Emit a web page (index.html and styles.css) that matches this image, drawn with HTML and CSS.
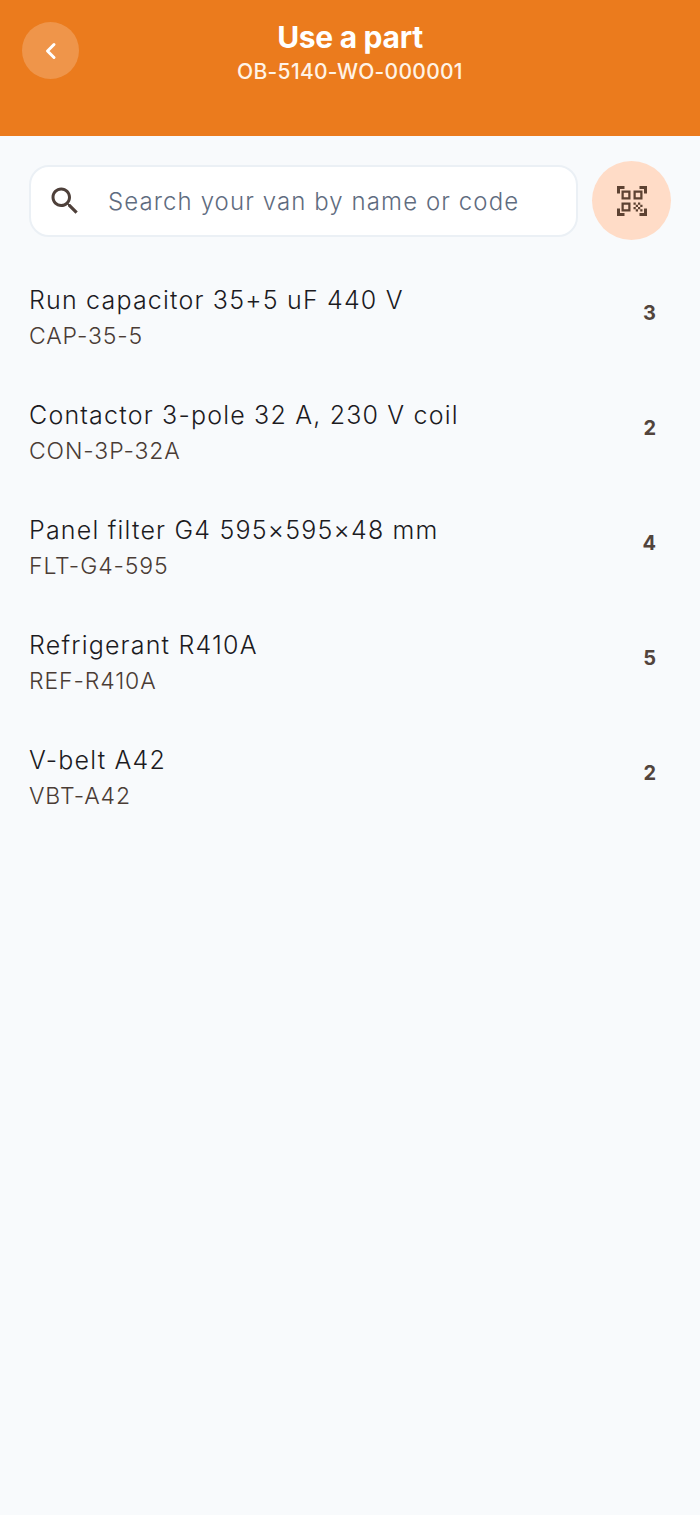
FILE: index.html
```html
<!DOCTYPE html>
<html lang="en">
<head>
  <meta charset="UTF-8" />
  <meta name="viewport" content="width=device-width, initial-scale=1.0"/>
  <title>Use a part</title>
  <link rel="stylesheet" href="styles.css">
</head>
<body>
  <header class="topbar">
    <button class="back-btn" aria-label="Back">
      <svg width="18" height="22" viewBox="0 0 18 22"><path d="M12 4.5 5.5 11l6.5 6.5" fill="none" stroke="#fff" stroke-width="3" stroke-linecap="round" stroke-linejoin="round"/></svg>
    </button>
    <div class="topbar-titles">
      <h1>Use a part</h1>
      <div class="topbar-sub">OB-5140-WO-000001</div>
    </div>
  </header>

  <main>
    <div class="search-row">
      <div class="search-box">
        <svg class="search-icon" width="36" height="36" viewBox="0 0 24 24"><path fill="#4e403a" d="M15.5 14h-.79l-.28-.27C15.41 12.59 16 11.11 16 9.5 16 5.91 13.09 3 9.5 3S3 5.91 3 9.5 5.91 16 9.5 16c1.61 0 3.09-.59 4.23-1.57l.27.28v.79l5 4.99L20.49 19l-4.99-5zm-6 0C7.01 14 5 11.99 5 9.5S7.01 5 9.5 5 14 7.01 14 9.5 11.99 14 9.5 14z"/></svg>
        <span class="search-hint">Search your van by name or code</span>
      </div>
      <button class="scan-btn" aria-label="Scan">
        <svg width="36" height="36" viewBox="0 0 24 24"><path fill="#5d4232" d="M9.5 6.5v3h-3v-3h3M11 5H5v6h6V5zm-1.5 9.5v3h-3v-3h3M11 13H5v6h6v-6zm6.5-6.5v3h-3v-3h3M19 5h-6v6h6V5zm-6 8h1.5v1.5H13V13zm1.5 1.5H16V16h-1.5v-1.5zM16 13h1.5v1.5H16V13zm-3 3h1.5v1.5H13V16zm1.5 1.5H16V19h-1.5v-1.5zM16 16h1.5v1.5H16V16zm1.5-1.5H19V16h-1.5v-1.5zm0 3H19V19h-1.5v-1.5zM22 7h-2V4h-3V2h5v5zm0 15v-5h-2v3h-3v2h5zM2 22h5v-2H4v-3H2v5zM2 2v5h2V4h3V2H2z"/></svg>
      </button>
    </div>

    <ul class="part-list">
      <li class="part">
        <div>
          <div class="part-name">Run capacitor 35+5 uF 440 V</div>
          <div class="part-code">CAP-35-5</div>
        </div>
        <span class="part-qty">3</span>
      </li>
      <li class="part">
        <div>
          <div class="part-name">Contactor 3-pole 32 A, 230 V coil</div>
          <div class="part-code">CON-3P-32A</div>
        </div>
        <span class="part-qty">2</span>
      </li>
      <li class="part">
        <div>
          <div class="part-name">Panel filter G4 595×595×48 mm</div>
          <div class="part-code">FLT-G4-595</div>
        </div>
        <span class="part-qty">4</span>
      </li>
      <li class="part">
        <div>
          <div class="part-name">Refrigerant R410A</div>
          <div class="part-code">REF-R410A</div>
        </div>
        <span class="part-qty">5</span>
      </li>
      <li class="part">
        <div>
          <div class="part-name">V-belt A42</div>
          <div class="part-code">VBT-A42</div>
        </div>
        <span class="part-qty">2</span>
      </li>
    </ul>
  </main>
</body>
</html>
```

FILE: styles.css
```css
html, body {
  height: 100%;
}

body {
  margin: 0;
  font-family: Inter, sans-serif;
  background-color: #f8fafc;
  color: #1c1b1f;
}

button {
  border: 0;
  padding: 0;
  display: flex;
  align-items: center;
  justify-content: center;
}

.topbar {
  box-sizing: border-box;
  height: 136px;
  padding: 22px 22px 0;
  background-color: #eb7b1d;
  display: flex;
  align-items: flex-start;
}

.back-btn {
  width: 57px;
  height: 57px;
  flex: none;
  border-radius: 50%;
  background-color: rgba(255,255,255,0.2);
}

.topbar-titles {
  flex: 1;
  margin-right: 57px;
  text-align: center;
  color: white;
}

.topbar-titles h1 {
  margin: 0;
  font-size: 30px;
  line-height: 30px;
  font-weight: 700;
  letter-spacing: -0.3px;
}

.topbar-sub {
  margin-top: 8px;
  font-size: 21px;
  line-height: 24px;
  font-weight: 500;
  letter-spacing: 0.3px;
  color: #fff3e6;
}

main {
  padding: 25px 29px 0;
}

.search-row {
  display: flex;
  align-items: center;
  gap: 14px;
}

.search-box {
  box-sizing: border-box;
  flex: 1;
  height: 72px;
  padding: 1px 0 0 16px;
  display: flex;
  align-items: center;
  gap: 25px;
  background-color: white;
  border: 2px solid #ebf0f5;
  border-radius: 20px;
}

.search-icon {
  flex: none;
  margin-top: -1px;
}

.search-hint {
  font-size: 24px;
  font-weight: 300;
  letter-spacing: 1.09px;
  color: #5f6c80;
}

.scan-btn {
  width: 79px;
  height: 79px;
  flex: none;
  border-radius: 50%;
  background-color: #ffdcc7;
}

.part-list {
  list-style: none;
  margin: 20px 0 0;
  padding: 0;
}

.part {
  height: 115px;
  display: flex;
  align-items: center;
  justify-content: space-between;
}

.part-name {
  font-size: 25px;
  font-weight: 300;
  line-height: 34px;
  letter-spacing: 1.19px;
  color: #1c1b1f;
}

.part-code {
  margin-top: 2px;
  font-size: 23px;
  font-weight: 300;
  line-height: 34px;
  letter-spacing: 0.88px;
  color: #4a3c35;
}

.part-qty {
  margin-right: 15px;
  margin-bottom: 10px;
  font-size: 20px;
  font-weight: 700;
  color: #52443c;
}
```
